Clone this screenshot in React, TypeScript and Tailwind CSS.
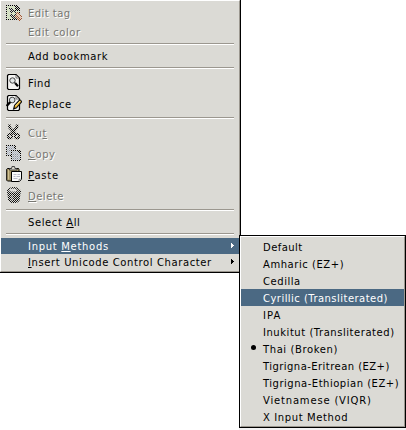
import type { ReactNode } from "react";

const svg = "absolute left-[5px] top-[2px] h-4 w-4";

function Stipple({ id }: { id: string }) {
  return (
    <>
      <defs>
        <pattern id={id} width="2" height="2" patternUnits="userSpaceOnUse">
          <path d="M1 0h1v1h-1zM0 1h1v1h-1z" fill="#dbdad5" shapeRendering="crispEdges" />
        </pattern>
      </defs>
      <rect width="16" height="16" fill={`url(#${id})`} shapeRendering="crispEdges" />
    </>
  );
}

function TagIcon() {
  return (
    <svg className={svg} viewBox="0 0 16 16" shapeRendering="crispEdges">
      <path d="M0 0h10l4 4v11H0z" fill="#000" />
      <path d="M1 1h8v4h4v9H1z" fill="#cfe6b4" />
      <path d="M9 1v4h4" fill="none" stroke="#000" />
      <path d="M3 3h4l2 3 2 1v3l2 4H6L3 11l2-3z" fill="#222" />
      <path d="M6 7h3v3H6z" fill="#cfe6b4" />
      <path d="M10 8l2-1 4 4v4l-2 1h-2l-3-4z" fill="#a2522b" />
      <path d="M11 9h2l2 3-1 1-3-2z" fill="#f0b592" />
      <Stipple id="tag-dots" />
    </svg>
  );
}

function Page() {
  return (
    <>
      <path d="M2.5.5H10L13.5 4v10.5l-1 1h-10l-1-1v-13z" fill="#f4f4f2" stroke="#000" strokeWidth="1.2" />
      <path d="M10 1v3h3z" fill="#fff" stroke="#555" strokeWidth=".8" />
    </>
  );
}

function FindIcon() {
  return (
    <svg className={svg} viewBox="0 0 16 16">
      <Page />
      <circle cx="6.5" cy="6.5" r="2.7" fill="#e4e8e8" stroke="#444" />
      <path d="M8.5 8.5l1 1" stroke="#222" strokeWidth="1.5" />
      <path d="M9.3 9.3l2.7 3" stroke="#000" strokeWidth="2.2" />
    </svg>
  );
}

function ReplaceIcon() {
  return (
    <svg className={svg} viewBox="0 0 16 16">
      <Page />
      <circle cx="6.2" cy="5" r="2.8" fill="#dce3e6" stroke="#444" />
      <path d="M4.3 7L.6 11" stroke="#000" strokeWidth="2.4" />
      <path d="M7.6 14l1-3.6L13.8 4.8l2 1.8-5.3 6.2z" fill="#f0b429" stroke="#111" strokeWidth="1.1" />
      <path d="M9.5 11l4.7-5.1" stroke="#ffe687" />
      <path d="M7.6 14l.5-1.8 1.3 1.2z" fill="#000" />
    </svg>
  );
}

function CutIcon() {
  return (
    <svg className={svg} viewBox="0 0 16 16">
      <path d="M3.5.5v3L9.5 10M11 .5v3L5 10" fill="none" stroke="#000" strokeWidth="2.6" />
      <circle cx="4" cy="12.2" r="2.1" fill="none" stroke="#000" strokeWidth="2" />
      <circle cx="11" cy="12.2" r="2.1" fill="none" stroke="#000" strokeWidth="2" />
      <Stipple id="cut-dots" />
    </svg>
  );
}

function CopyIcon() {
  return (
    <svg className={svg} viewBox="0 0 16 16" shapeRendering="crispEdges">
      <path d="M0 0h8l2 2v9H0z" fill="#000" />
      <path d="M1 1h7v2h1v7H1z" fill="#aab4c6" />
      <path d="M5 5h8l2 2v9H5z" fill="#000" />
      <path d="M6 6h6v2h2v7H6z" fill="#aab4c6" />
      <path d="M2 3h5M2 5h3M7 9h6M7 11h6M7 13h5" stroke="#858da0" />
      <Stipple id="copy-dots" />
    </svg>
  );
}

function PasteIcon() {
  return (
    <svg className={svg} viewBox="0 0 16 16">
      <path d="M1.5 2.5h11l.5 1v11l-.5.5h-11l-.8-.8V3.2z" fill="#a89768" stroke="#000" />
      <path d="M2.5 4v9.5" stroke="#d0c294" />
      <path d="M3.5 4V2.5h2l.5-2h2.5l.5 2h2V4z" fill="#d8d5ca" stroke="#333" strokeWidth=".9" />
      <path d="M5.5 5.5h10v8l-2 2h-8z" fill="#fafafa" stroke="#000" />
      <path d="M7.5 8.5h3M11.5 8.5h2.5M7.5 10.5h2M10.5 10.5h3.5M7.5 12.5h4" stroke="#aab" strokeWidth=".8" />
      <path d="M13 15.5v-2.3h2.5" fill="#ddd" stroke="#666" strokeWidth=".6" />
    </svg>
  );
}

function DeleteIcon() {
  return (
    <svg className={svg} viewBox="0 0 16 16">
      <path d="M1.5 4l1.3 9.5c1 2.8 9.3 2.8 10.2 0L14.3 4z" fill="#111" stroke="#000" />
      <path d="M6 7.5v6.5" stroke="#999" />
      <ellipse cx="7.8" cy="3.7" rx="6.3" ry="3.1" fill="#444" stroke="#000" />
      <ellipse cx="7" cy="3.2" rx="3.5" ry="1.4" fill="#ddd" />
      <Stipple id="delete-dots" />
    </svg>
  );
}

function Item({ children, icon, height, tracking, disabled, active, arrow }: {
  children: ReactNode; icon?: ReactNode; height: string; tracking: string;
  disabled?: boolean; active?: boolean; arrow?: boolean;
}) {
  const tone = active ? "bg-[#4b6983] text-white" : disabled ? "text-[#777772] [text-shadow:1px_1px_0_#fff]" : "text-black";
  return (
    <div className={`relative flex items-center pt-[2px] pl-[27px] ${height} ${tone}`}>
      {icon}
      <span className={tracking}>{children}</span>
      {arrow && (
        <svg className="absolute right-[5px] top-[5px] h-[5px] w-[3px]" viewBox="0 0 3 5" shapeRendering="crispEdges">
          <path d="M0 0h1v1h1v1h1v1h-1v1h-1v1h-1z" fill="currentColor" />
        </svg>
      )}
    </div>
  );
}

const Sep = () => <div className="mr-[5px] ml-[5px] h-[2px] border-t border-b border-t-[#9b978f] border-b-white" />;
const U = ({ children }: { children: string }) => <span className="underline decoration-1 underline-offset-[1px]">{children}</span>;

const methods = [
  ["Default", "tracking-[0.45px]"],
  ["Amharic (EZ+)", "tracking-[0.55px]"],
  ["Cedilla", "tracking-[0.55px]"],
  ["Cyrillic (Transliterated)", "tracking-[0.46px]"],
  ["IPA", "tracking-[1.1px]"],
  ["Inukitut (Transliterated)", "tracking-[0.54px]"],
  ["Thai (Broken)", "tracking-[0.6px]"],
  ["Tigrigna-Eritrean (EZ+)", "tracking-[0.45px]"],
  ["Tigrigna-Ethiopian (EZ+)", "tracking-[0.51px]"],
  ["Vietnamese (VIQR)", "tracking-[0.82px]"],
  ["X Input Method", "tracking-[0.62px]"],
];

export default function App() {
  return (
    <div className="relative h-[430px] w-[406px] overflow-hidden bg-white font-['DejaVu_Sans',sans-serif] text-[10px] leading-[12px] whitespace-nowrap">
      <div className="h-[273px] w-[241px] border-r border-b border-black">
        <div className="h-full w-full border-t border-r border-b border-l border-t-white border-r-[#9b978f] border-b-[#9b978f] border-l-white bg-[#dbdad5]">
          <div className="h-[2px]" />
          <Item icon={<TagIcon />} height="h-[20px]" tracking="tracking-[0.45px]" disabled>Edit tag</Item>
          <Item height="h-[18px]" tracking="tracking-[0.55px]" disabled>Edit color</Item>
          <div className="h-[2px]" />
          <Sep />
          <div className="h-[2px]" />
          <Item height="h-[18px]" tracking="tracking-[0.63px]">Add bookmark</Item>
          <div className="h-[2px]" />
          <Sep />
          <div className="h-[3px]" />
          <Item icon={<FindIcon />} height="h-[21px]" tracking="tracking-[0.65px]">Find</Item>
          <Item icon={<ReplaceIcon />} height="h-[21px]" tracking="tracking-[0.6px]">Replace</Item>
          <div className="h-[3px]" />
          <Sep />
          <div className="h-[3px]" />
          <Item icon={<CutIcon />} height="h-[21px]" tracking="tracking-[0.55px]" disabled>Cu<U>t</U></Item>
          <Item icon={<CopyIcon />} height="h-[21px]" tracking="tracking-[0.55px]" disabled><U>C</U>opy</Item>
          <Item icon={<PasteIcon />} height="h-[21px]" tracking="tracking-[0.8px]"><U>P</U>aste</Item>
          <Item icon={<DeleteIcon />} height="h-[21px]" tracking="tracking-[0.5px]" disabled><U>D</U>elete</Item>
          <div className="h-[3px]" />
          <Sep />
          <div className="h-[2px]" />
          <Item height="h-[18px]" tracking="tracking-[0.6px]">Select <U>A</U>ll</Item>
          <div className="h-[2px]" />
          <Sep />
          <div className="h-[3px]" />
          <Item height="h-[16px]" tracking="tracking-[0.7px]" active arrow>Input <U>M</U>ethods</Item>
          <Item height="h-[16px]" tracking="tracking-[0.61px]" arrow><U>I</U>nsert Unicode Control Character</Item>
        </div>
      </div>
      <div className="absolute top-[235px] left-[239px] h-[193px] w-[167px] border border-black">
        <div className="h-full w-full border-t border-r border-b border-l border-t-white border-r-[#9b978f] border-b-[#9b978f] border-l-white bg-[#dbdad5] pt-px">
          {methods.map(([name, spacing], i) => (
            <div key={name} className={`relative flex h-[17px] items-center pt-[2px] pl-[22px] ${i === 3 ? "bg-[#4b6983] text-white" : "text-black"}`}>
              {i === 6 && <span className="absolute top-[5px] left-[10px] h-[5px] w-[5px] rounded-full bg-black" />}
              <span className={spacing}>{name}</span>
            </div>
          ))}
        </div>
      </div>
      <div className="absolute top-[428px] left-[239px] h-[2px] w-[167px] bg-[#f3f2f3]" />
    </div>
  );
}
